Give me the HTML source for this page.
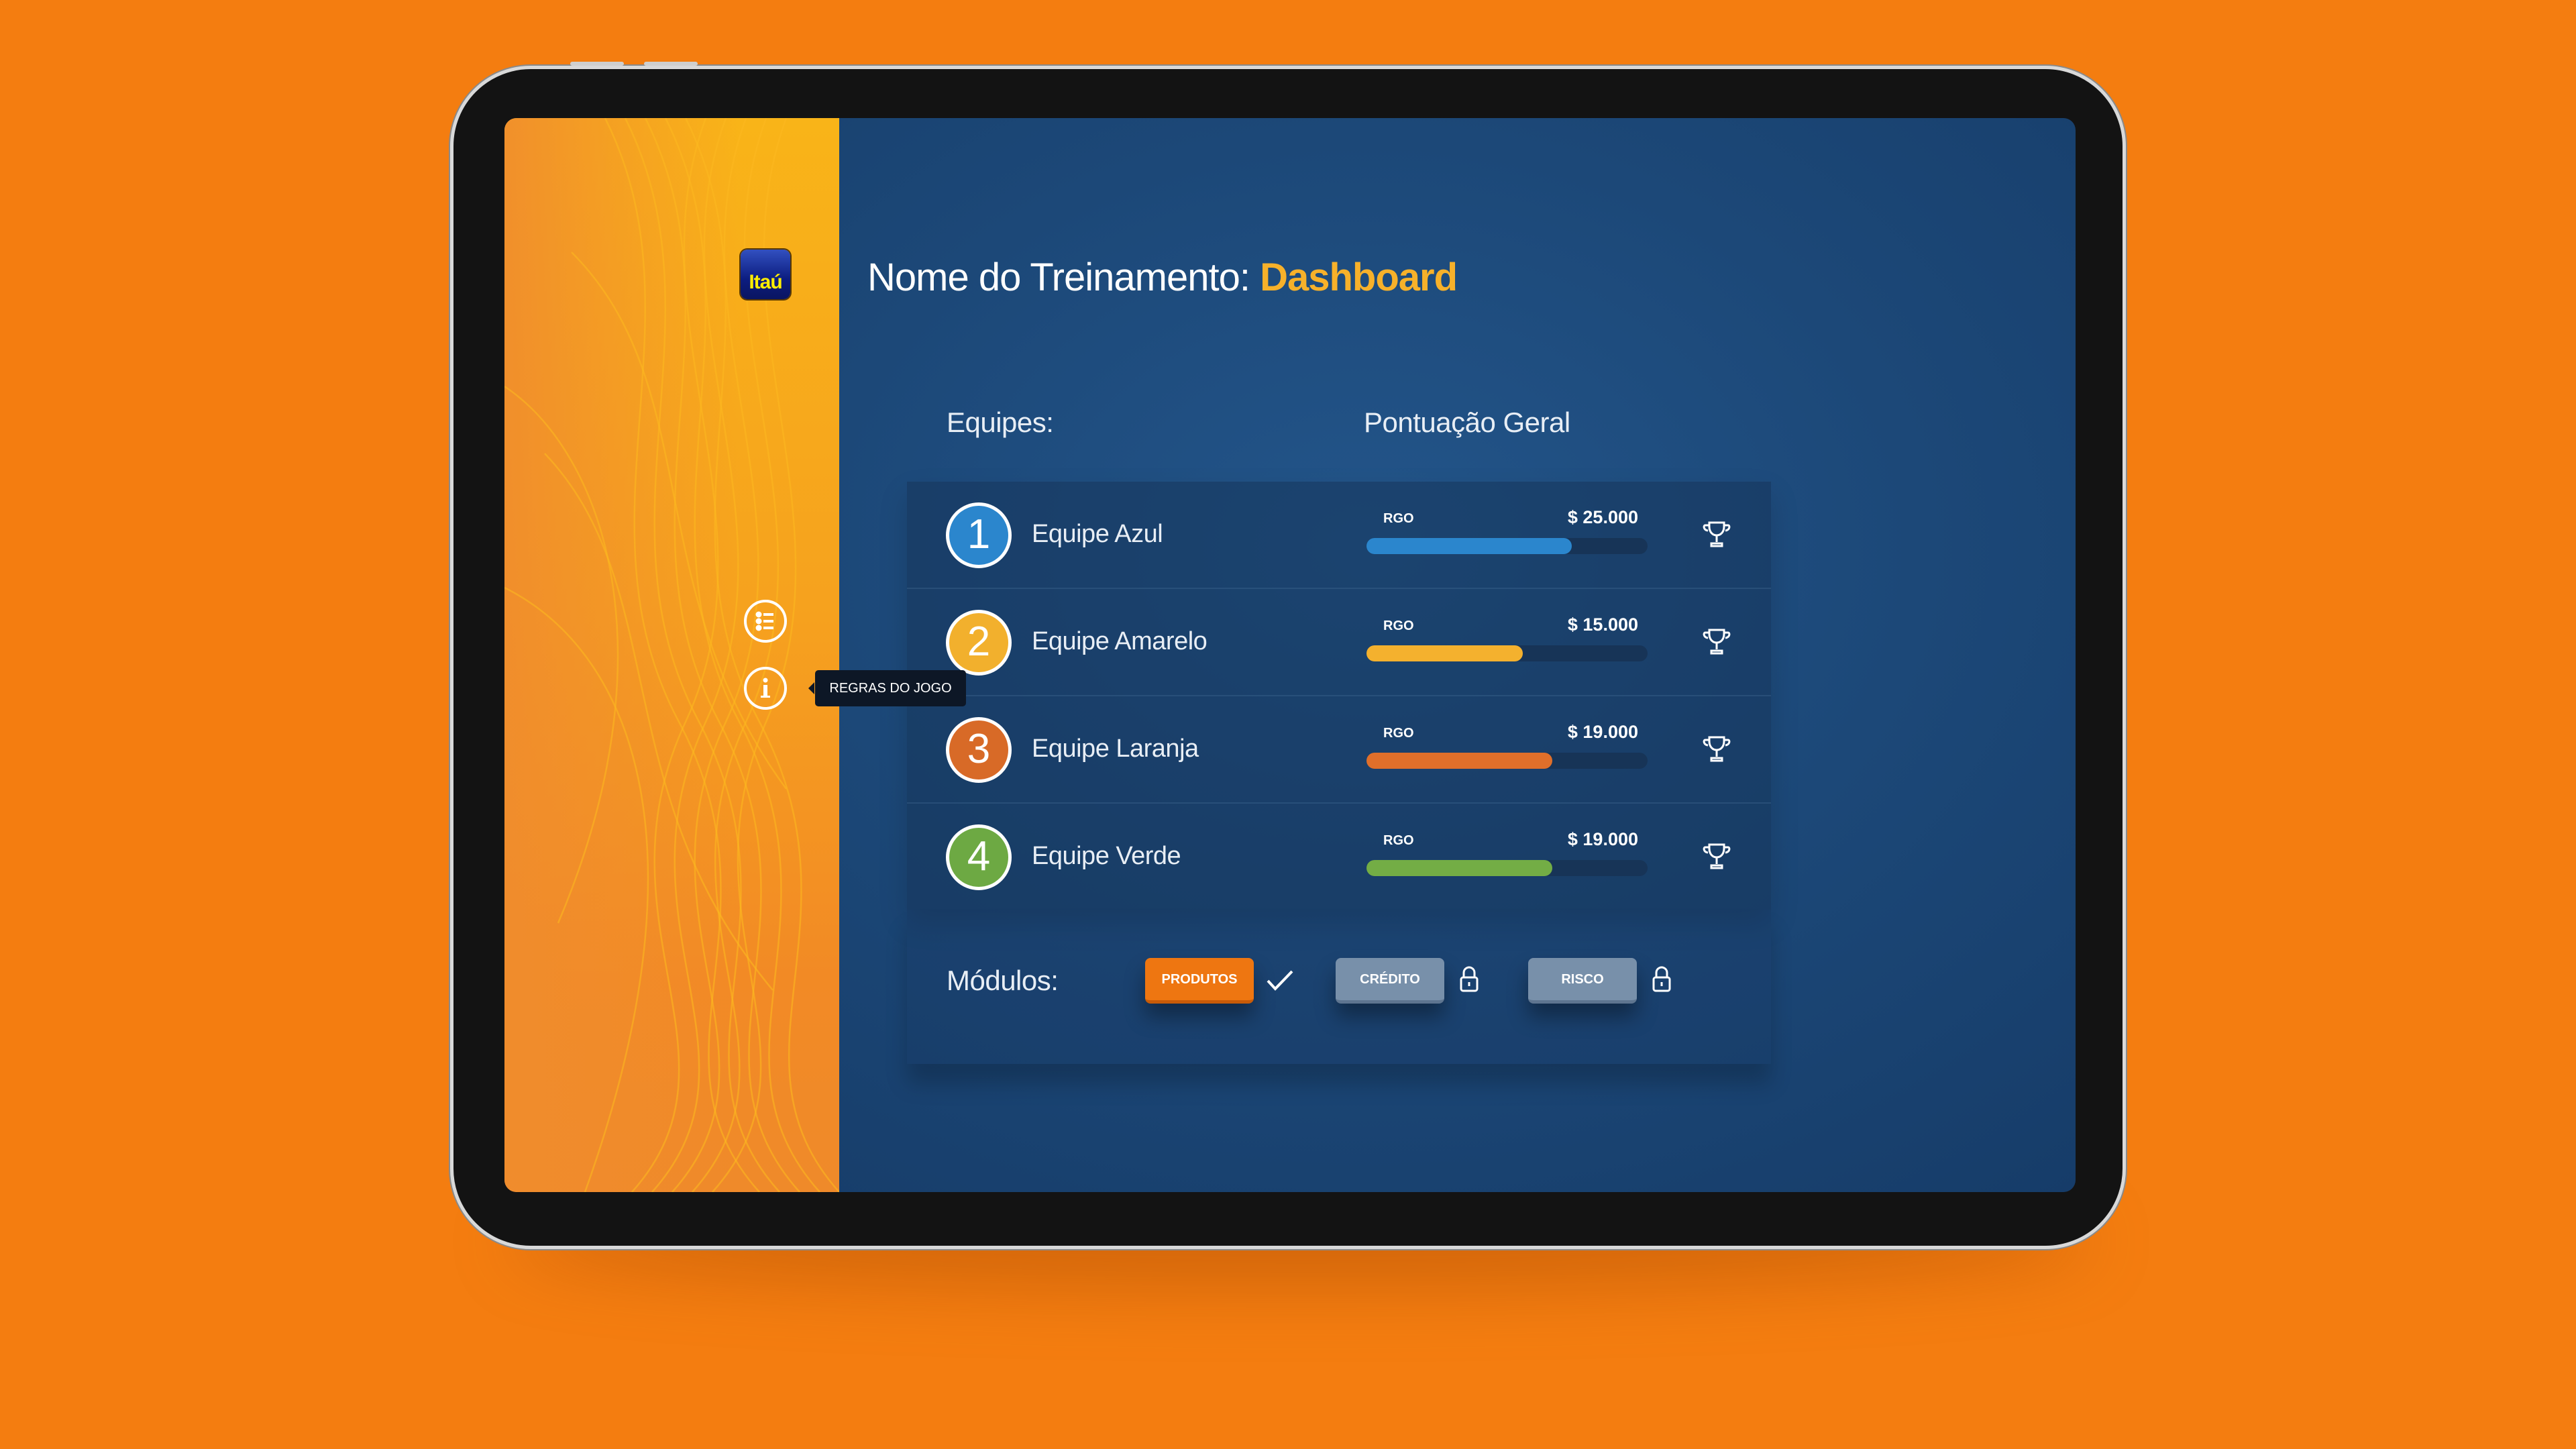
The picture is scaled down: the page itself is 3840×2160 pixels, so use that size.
<!DOCTYPE html>
<html><head><meta charset="utf-8"><style>
*{margin:0;padding:0;box-sizing:border-box}
body{width:3840px;height:2160px;overflow:hidden;background:#f47d10;font-family:"Liberation Sans",sans-serif;position:relative}
.shadow{position:absolute;left:760px;top:1780px;width:2360px;height:140px;border-radius:50%;background:rgba(150,60,0,.35);filter:blur(50px)}
.tablet{position:absolute;left:671px;top:98px;width:2498px;height:1764px;border-radius:120px;background:#131313;border:5px solid #d9d9d9;box-shadow:0 0 0 2px #8a8a8a}
.btn{position:absolute;top:92px;height:6px;background:#cfcfcf;border-radius:3px}
.screen{position:absolute;left:752px;top:176px;width:2342px;height:1601px;border-radius:18px;overflow:hidden;background:radial-gradient(ellipse at 55% 40%,#23558a 0%,#1c4878 45%,#153a66 100%)}
.side{position:absolute;left:0;top:0;width:499px;height:100%;background:linear-gradient(to right,rgba(240,140,45,.9),rgba(240,140,45,0) 70%),linear-gradient(180deg,#f9b418 0%,#f6a21e 45%,#f28a25 80%,#ef8a2a 100%)}
.abs{position:absolute}
.logo{left:352px;top:196px;width:74px;height:74px;border-radius:10px;background:linear-gradient(#3250c0,#0c1d80 60%,#0a1560);box-shadow:0 0 0 2px #5a3a00}
.logo span{position:absolute;left:0;right:0;bottom:8px;text-align:center;color:#ffee00;font-weight:bold;font-size:30px;letter-spacing:-1px}
.ic{width:64px;height:64px;border:4px solid #fff;border-radius:50%}
.tip{left:463px;top:823px;width:225px;height:54px;background:#0d1726;border-radius:5px;color:#fff;font-size:20px;line-height:54px;text-align:center;z-index:5}
.tip:before{content:"";position:absolute;left:-10px;top:18px;border:9px solid transparent;border-right-color:#0d1726;border-left:0}
.title{left:541px;top:204px;color:#fff;font-size:58px;white-space:nowrap;letter-spacing:-1px}
.title b{color:#f7b12a}
.h{color:#e8eef5;font-size:42px;letter-spacing:-.5px}
.panel{left:600px;top:542px;width:1288px;height:638px;background:rgba(22,52,90,.55);box-shadow:0 20px 40px rgba(0,0,0,.15)}
.panel2{left:600px;top:1180px;width:1288px;height:230px;background:rgba(22,52,90,.25);box-shadow:0 30px 30px rgba(0,0,0,.2)}
.row{position:absolute;left:0;width:1288px;height:160px;border-bottom:2px solid rgba(70,110,150,.35)}
.circ{position:absolute;left:58px;top:31px;width:98px;height:98px;border-radius:50%;border:5px solid #fff;color:#fff;font-size:62px;text-align:center;line-height:86px;font-weight:300}
.name{position:absolute;left:186px;top:57px;color:#e8eef5;font-size:38px;letter-spacing:-.5px}
.rgo{position:absolute;left:710px;top:44px;color:#fff;font-size:20px;font-weight:bold}
.val{position:absolute;right:198px;top:38px;color:#fff;font-size:27px;font-weight:bold}
.bar{position:absolute;left:685px;top:84px;width:419px;height:24px;border-radius:12px;background:#173457}
.fill{height:100%;border-radius:12px}
.troph{position:absolute;left:1185px;top:58px}
.mbtn{position:absolute;top:1252px;width:162px;height:68px;border-radius:8px;color:#fff;font-size:20px;font-weight:bold;text-align:center;line-height:64px;box-shadow:0 20px 30px rgba(0,0,0,.35)}
</style></head><body>
<div class="shadow"></div>
<div class="tablet"></div>
<div class="btn" style="left:850px;width:80px"></div>
<div class="btn" style="left:960px;width:80px"></div>
<div class="screen">
  <div class="side">
    <svg class="abs" style="left:0;top:0" width="499" height="1601" viewBox="0 0 499 1601" fill="none" stroke="#fcb820" stroke-opacity=".6" stroke-width="2.5">
      <path d="M150 0 C300 300 100 600 260 900 S200 1400 380 1601"/>
      <path d="M180 0 C330 300 130 600 290 900 S230 1400 410 1601"/>
      <path d="M210 0 C360 300 160 600 320 900 S260 1400 440 1601"/>
      <path d="M240 0 C390 300 190 600 350 900 S290 1400 470 1601"/>
      <path d="M270 0 C420 300 220 600 380 900 S320 1400 499 1601"/>
      <path d="M300 0 C190 300 410 600 270 900 S370 1400 190 1601"/>
      <path d="M330 0 C220 300 440 600 300 900 S400 1400 220 1601"/>
      <path d="M360 0 C250 300 470 600 330 900 S430 1400 250 1601"/>
      <path d="M390 0 C280 300 499 600 360 900 S460 1400 280 1601"/>
      <path d="M420 0 C310 300 520 600 390 900 S490 1400 310 1601"/>
      <path d="M100 200 C300 400 200 700 420 1000"/>
      <path d="M60 500 C250 700 150 1000 400 1300"/>
      <path d="M0 700 C200 800 300 1100 120 1601"/>
      <path d="M0 400 C150 500 250 800 80 1200"/>
    </svg>
    <div class="abs logo"><span>Itaú</span></div>
    <div class="abs ic" style="left:357px;top:718px">
      <svg width="56" height="56" viewBox="0 0 56 56" stroke="#fff" stroke-width="4" fill="#fff"><circle cx="18" cy="18" r="2.5"/><circle cx="18" cy="28" r="2.5"/><circle cx="18" cy="38" r="2.5"/><path d="M25 18h15M25 28h15M25 38h15" fill="none"/></svg>
    </div>
    <div class="abs ic" style="left:357px;top:818px">
      <svg width="56" height="56" viewBox="0 0 56 56" fill="#fff"><circle cx="28" cy="16" r="3.5"/><rect x="25" y="23" width="6" height="18"/><rect x="21" y="39" width="14" height="3"/></svg>
    </div>
  </div>
  <div class="abs title">Nome do Treinamento: <b>Dashboard</b></div>
  <div class="abs h" style="left:659px;top:430px">Equipes:</div>
  <div class="abs h" style="left:1281px;top:430px">Pontuação Geral</div>
  <div class="abs panel">
    <div class="row" style="top:0"><div class="circ" style="background:#2b86cd">1</div><div class="name">Equipe Azul</div><div class="rgo">RGO</div><div class="val">$ 25.000</div><div class="bar"><div class="fill" style="width:306px;background:#2b86cd"></div></div><svg class="troph" width="44" height="42" viewBox="0 0 44 42" fill="none" stroke="#fff" stroke-width="3"><path d="M11 3h22v6c0 8-5 13-11 13S11 17 11 9z"/><path d="M11 7H5c-3 0-3 7 4 8M33 7h6c3 0 3 7-4 8M22 22v10M14 38h16v-4H14z"/></svg></div>
    <div class="row" style="top:160px"><div class="circ" style="background:#f2b02d">2</div><div class="name">Equipe Amarelo</div><div class="rgo">RGO</div><div class="val">$ 15.000</div><div class="bar"><div class="fill" style="width:233px;background:#f4b12e"></div></div><svg class="troph" width="44" height="42" viewBox="0 0 44 42" fill="none" stroke="#fff" stroke-width="3"><path d="M11 3h22v6c0 8-5 13-11 13S11 17 11 9z"/><path d="M11 7H5c-3 0-3 7 4 8M33 7h6c3 0 3 7-4 8M22 22v10M14 38h16v-4H14z"/></svg></div>
    <div class="row" style="top:320px"><div class="circ" style="background:#d86a27">3</div><div class="name">Equipe Laranja</div><div class="rgo">RGO</div><div class="val">$ 19.000</div><div class="bar"><div class="fill" style="width:277px;background:#e06f2a"></div></div><svg class="troph" width="44" height="42" viewBox="0 0 44 42" fill="none" stroke="#fff" stroke-width="3"><path d="M11 3h22v6c0 8-5 13-11 13S11 17 11 9z"/><path d="M11 7H5c-3 0-3 7 4 8M33 7h6c3 0 3 7-4 8M22 22v10M14 38h16v-4H14z"/></svg></div>
    <div class="row" style="top:480px;border:0"><div class="circ" style="background:#6da943">4</div><div class="name">Equipe Verde</div><div class="rgo">RGO</div><div class="val">$ 19.000</div><div class="bar"><div class="fill" style="width:277px;background:#73ad45"></div></div><svg class="troph" width="44" height="42" viewBox="0 0 44 42" fill="none" stroke="#fff" stroke-width="3"><path d="M11 3h22v6c0 8-5 13-11 13S11 17 11 9z"/><path d="M11 7H5c-3 0-3 7 4 8M33 7h6c3 0 3 7-4 8M22 22v10M14 38h16v-4H14z"/></svg></div>
  </div>
  <div class="abs panel2"></div>
  <div class="abs tip">REGRAS DO JOGO</div>
  <div class="abs h" style="left:659px;top:1262px">Módulos:</div>
  <div class="mbtn" style="left:955px;background:#ee7611;border-bottom:5px solid #c85b08">PRODUTOS</div>
  <svg class="abs" style="left:1134px;top:1268px" width="44" height="36" viewBox="0 0 44 36" fill="none" stroke="#fff" stroke-width="4"><path d="M4 18l11 12L40 4"/></svg>
  <div class="mbtn" style="left:1239px;background:#7890aa;border-bottom:5px solid #5e7590">CRÉDITO</div>
  <svg class="abs" style="left:1423px;top:1264px" width="30" height="40" viewBox="0 0 30 40" fill="none" stroke="#fff" stroke-width="3"><path d="M7 17V10a8 8 0 0 1 16 0v7"/><rect x="3" y="17" width="24" height="20" rx="3"/><path d="M15 24v6"/></svg>
  <div class="mbtn" style="left:1526px;background:#7890aa;border-bottom:5px solid #5e7590">RISCO</div>
  <svg class="abs" style="left:1710px;top:1264px" width="30" height="40" viewBox="0 0 30 40" fill="none" stroke="#fff" stroke-width="3"><path d="M7 17V10a8 8 0 0 1 16 0v7"/><rect x="3" y="17" width="24" height="20" rx="3"/><path d="M15 24v6"/></svg>
</div>
</body></html>
